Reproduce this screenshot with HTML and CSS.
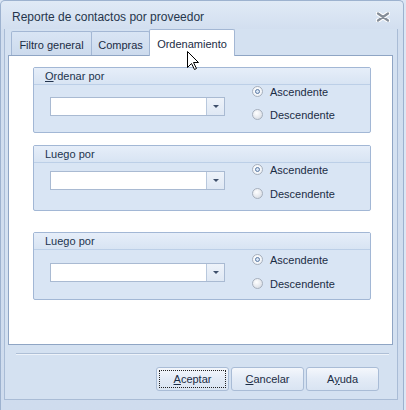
FILE: index.html
```html
<!DOCTYPE html>
<html lang="es">
<head>
<meta charset="utf-8">
<title>Reporte de contactos por proveedor</title>
<link rel="stylesheet" href="styles.css">
</head>
<body>
<div class="window">
  <div class="titlebar">
    <span class="title">Reporte de contactos por proveedor</span>
    <svg class="close" width="14" height="10" viewBox="0 0 14 10">
      <path d="M2 1.5 L12 8.5 M12 1.5 L2 8.5" stroke="#ffffff" stroke-width="4.5" stroke-linecap="round"/>
      <path d="M2 1.5 L12 8.5 M12 1.5 L2 8.5" stroke="#858d98" stroke-width="2.2" stroke-linecap="round"/>
    </svg>
  </div>
  <div class="client">
    <div class="tabs">
      <div class="tab tab-filtro">Filtro general</div>
      <div class="tab tab-compras">Compras</div>
      <div class="tab tab-orden active">Ordenamiento</div>
    </div>
    <div class="panel">
      <div class="group g1">
        <div class="group-head"><u>O</u>rdenar por</div>
        <div class="group-body">
          <div class="combo"><div class="combo-field"></div><div class="combo-btn"><span class="arrow"></span></div></div>
          <div class="radios">
            <div class="radio-row"><span class="radio checked"></span>Ascendente</div>
            <div class="radio-row"><span class="radio"></span>Descendente</div>
          </div>
        </div>
      </div>
      <div class="group g2">
        <div class="group-head">Luego por</div>
        <div class="group-body">
          <div class="combo"><div class="combo-field"></div><div class="combo-btn"><span class="arrow"></span></div></div>
          <div class="radios">
            <div class="radio-row"><span class="radio checked"></span>Ascendente</div>
            <div class="radio-row"><span class="radio"></span>Descendente</div>
          </div>
        </div>
      </div>
      <div class="group g3">
        <div class="group-head">Luego por</div>
        <div class="group-body">
          <div class="combo"><div class="combo-field"></div><div class="combo-btn"><span class="arrow"></span></div></div>
          <div class="radios">
            <div class="radio-row"><span class="radio checked"></span>Ascendente</div>
            <div class="radio-row"><span class="radio"></span>Descendente</div>
          </div>
        </div>
      </div>
    </div>
    <div class="separator"></div>
    <div class="buttons">
      <button class="btn focused"><span class="btn-inner"><u>A</u>ceptar</span></button>
      <button class="btn"><span class="btn-inner"><u>C</u>ancelar</span></button>
      <button class="btn"><span class="btn-inner">A<u>y</u>uda</span></button>
    </div>
  </div>
  <svg class="cursor" width="13" height="20" viewBox="0 0 13 20">
    <path d="M0.5 0.5 L0.5 16.5 L4.5 12.5 L7.5 18.5 L9.5 17.5 L6.5 11.5 L11.5 11.5 Z" fill="#ffffff" stroke="#000000" stroke-width="1" stroke-linejoin="miter"/>
  </svg>
</div>
</body>
</html>
```

FILE: styles.css
```css
html, body {
  margin: 0;
  padding: 0;
}
body {
  background: #dbe6f4;
  font-family: "Liberation Sans", Arial, sans-serif;
  font-size: 11px;
  color: #1b2c44;
}
.window {
  position: relative;
  width: 404px;
  height: 410px;
  box-sizing: border-box;
  border: 1px solid #9db2cf;
  border-bottom: none;
  border-radius: 5px 5px 0 0;
  background: linear-gradient(#e0eaf6 0px, #d1deef 30px, #cfdcee 100%);
  display: flex;
  flex-direction: column;
}
.titlebar {
  height: 28px;
  box-sizing: border-box;
  padding: 3px 13px 0 11px;
  display: flex;
  align-items: center;
  justify-content: space-between;
}
.title {
  font-size: 12px;
  color: #26364c;
}
.close {
  margin-top: 1px;
}
.client {
  margin: 0 5px 0 3px;
  border-left: 1px solid #a9bcd6;
  border-right: 1px solid #a9bcd6;
  border-bottom: 1px solid #a9bcd6;
  background: #d4e1f1;
  display: flex;
  flex-direction: column;
}
.tabs {
  display: flex;
  align-items: flex-end;
  height: 26px;
  padding-left: 6px;
}
.tab {
  box-sizing: border-box;
  height: 24px;
  border: 1px solid #a3b7d4;
  border-bottom: none;
  margin-right: -1px;
  background: linear-gradient(#d9e5f4, #ccdaed);
  color: #1b2c44;
  text-align: center;
  line-height: 26px;
  border-radius: 2px 2px 0 0;
}
.tab-filtro { width: 81px; }
.tab-compras { width: 59px; }
.tab-orden { width: 86px; }
.tab.active {
  height: 27px;
  margin-bottom: -1px;
  background: #ffffff;
  position: relative;
  z-index: 1;
  line-height: 29px;
}
.panel {
  margin: 0 4px 0 3px;
  height: 290px;
  box-sizing: border-box;
  border: 1px solid #8fa5c4;
  background: #ffffff;
  padding: 11px 0 0 24px;
}
.group {
  width: 338px;
  box-sizing: border-box;
  border: 1px solid #a2b7d5;
  border-radius: 2px;
  background: #d9e5f4;
}
.g2 { margin-top: 12px; }
.g3 { margin-top: 21px; }
.group-head {
  height: 16px;
  line-height: 17px;
  padding-left: 11px;
  border-bottom: 1px solid #bccfe7;
  background: linear-gradient(#e6eef9, #d8e4f3);
  color: #22344e;
}
.group-body {
  height: 47px;
  display: flex;
  align-items: flex-start;
  padding-left: 16px;
}
.g3 .group-body { height: 49px; }
.combo {
  display: flex;
  width: 175px;
  height: 19px;
  box-sizing: border-box;
  border: 1px solid #a9bad2;
  background: #ffffff;
  margin-top: 12px;
}
.g2 .combo { margin-top: 8px; }
.g3 .combo { margin-top: 13px; }
.combo-field {
  flex: 1;
}
.combo-btn {
  width: 17px;
  border-left: 1px solid #b8c8dd;
  background: linear-gradient(#eef3fa, #dfe8f4);
  display: flex;
  align-items: center;
  justify-content: center;
}
.arrow {
  width: 0;
  height: 0;
  border-left: 3px solid transparent;
  border-right: 3px solid transparent;
  border-top: 3px solid #3e4f6b;
}
.radios {
  margin-left: 27px;
  display: flex;
  flex-direction: column;
  gap: 10px;
  padding-top: 0px;
}
.g2 .radios { gap: 11px; }
.g3 .radios { padding-top: 3px; gap: 11px; }
.radio-row {
  display: flex;
  align-items: center;
  height: 13px;
  color: #1b2c44;
}
.radio {
  position: relative;
  width: 11px;
  height: 11px;
  box-sizing: border-box;
  border-radius: 50%;
  border: 1px solid #a7b0bd;
  background: radial-gradient(circle at 40% 35%, #ffffff 0%, #e6e9ee 55%, #cdd3db 100%);
  margin-right: 7px;
}
.radio.checked {
  background: radial-gradient(circle at 45% 40%, #ffffff 0%, #f0f3f7 70%, #dfe4ea 100%);
}
.radio.checked::after {
  content: "";
  position: absolute;
  left: 2px;
  top: 2px;
  width: 5px;
  height: 5px;
  box-sizing: border-box;
  border-radius: 50%;
  border: 1px solid #5b79a3;
  background: #d8e5f5;
}
.separator {
  margin: 8px 8px 0 11px;
  border-top: 1px solid #aebfd6;
  border-bottom: 1px solid #eef3fa;
}
.buttons {
  display: flex;
  justify-content: flex-end;
  gap: 2px;
  padding: 12px 18px 8px 0;
}
.btn {
  width: 73px;
  height: 24px;
  box-sizing: border-box;
  border: 1px solid #a9bcd6;
  border-radius: 3px;
  background: linear-gradient(#f4f7fc, #e3ebf6 50%, #d9e4f2);
  font-family: "Liberation Sans", Arial, sans-serif;
  font-size: 11px;
  color: #1b2c44;
  padding: 2px;
  display: flex;
}
.btn-inner {
  flex: 1;
  display: flex;
  align-items: center;
  justify-content: center;
  border: 1px dotted transparent;
}
.btn.focused .btn-inner {
  border: 1px dotted #222222;
}
.cursor {
  position: absolute;
  left: 186px;
  top: 50px;
  z-index: 5;
}
```
